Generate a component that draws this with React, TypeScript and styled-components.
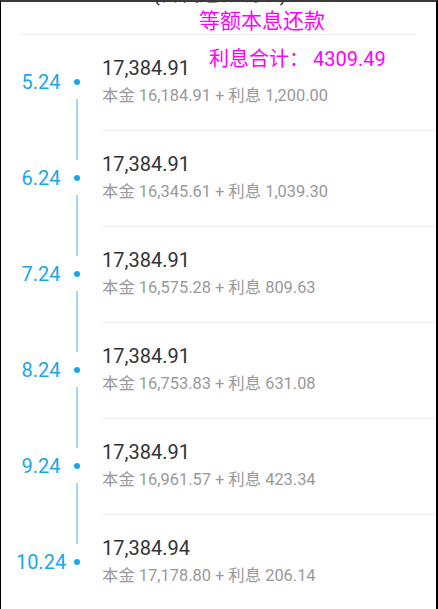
import React from "react";
import styled, { createGlobalStyle } from "styled-components";

const GlobalStyle = createGlobalStyle`
  html, body { margin: 0; padding: 0; background: #ffffff; }
  * { box-sizing: border-box; }
`;

const Frame = styled.div`
  position: relative;
  width: 438px;
  height: 609px;
  overflow: hidden;
  background: #ffffff;
  border-top: 2px solid #3a3a3a;
  border-left: 1px solid #000000;
  border-right: 2px solid #000000;
  font-family: Roboto, "Noto Sans CJK SC", sans-serif;
`;

const Header = styled.header`
  display: flex;
  flex-direction: column;
`;

const CutLine = styled.div`
  height: 7px;
  overflow: hidden;
  padding-left: 152px;
`;

const CutText = styled.span`
  display: block;
  margin-top: -20px;
  font-size: 20px;
  line-height: 24px;
  color: #333333;
`;

const Title = styled.h1`
  margin: 0;
  padding-left: 198px;
  font-size: 21px;
  line-height: 25px;
  font-weight: 400;
  color: #ff00ff;
`;

const HeaderDivider = styled.div`
  height: 1px;
  margin: 0 19px 0 19px;
  background: #efefef;
`;

const TotalBadge = styled.div`
  position: absolute;
  left: 208px;
  top: 45px;
  font-size: 20px;
  line-height: 24px;
  color: #ff00ff;
  white-space: nowrap;
`;

const TotalValue = styled.span`
  margin-left: 4px;
`;

const List = styled.div`
  display: flex;
  flex-direction: column;
`;

const Row = styled.div`
  display: flex;
  height: 96px;
  flex-shrink: 0;
`;

const DateLabel = styled.div`
  width: 60px;
  padding-left: 20px;
  display: flex;
  align-items: center;
  justify-content: center;
  padding-bottom: 2px;
  font-size: 20px;
  line-height: 24px;
  color: #1ba6e7;
  white-space: nowrap;
`;

const Timeline = styled.div`
  width: 31px;
  display: flex;
  flex-direction: column;
  align-items: center;
`;

const Segment = styled.div<{ $hidden?: boolean; $h: number }>`
  width: 2px;
  height: ${(p) => p.$h}px;
  background: ${(p) => (p.$hidden ? "transparent" : "#9dd7fb")};
`;

const Dot = styled.div`
  width: 6px;
  height: 6px;
  border-radius: 50%;
  background: #1ba6e7;
  margin: 15px 0 14px;
`;

const Content = styled.div`
  flex: 1;
  margin-left: 10px;
  display: flex;
  flex-direction: column;
  justify-content: center;
  padding-bottom: 2px;
  border-bottom: 1px solid #efefef;
`;

const Amount = styled.div`
  font-size: 20px;
  line-height: 28px;
  color: #333333;
`;

const Detail = styled.div`
  font-size: 16.4px;
  line-height: 28px;
  color: #999999;
  white-space: nowrap;
`;

const rows = [
  { date: "5.24", total: "17,384.91", principal: "16,184.91", interest: "1,200.00" },
  { date: "6.24", total: "17,384.91", principal: "16,345.61", interest: "1,039.30" },
  { date: "7.24", total: "17,384.91", principal: "16,575.28", interest: "809.63" },
  { date: "8.24", total: "17,384.91", principal: "16,753.83", interest: "631.08" },
  { date: "9.24", total: "17,384.91", principal: "16,961.57", interest: "423.34" },
  { date: "10.24", total: "17,384.94", principal: "17,178.80", interest: "206.14" },
];

export default function App() {
  return (
    <>
      <GlobalStyle />
      <Frame>
        <Header>
          <CutLine>
            <CutText>(含代还款明细)</CutText>
          </CutLine>
          <Title>等额本息还款</Title>
          <HeaderDivider />
        </Header>
        <List>
          {rows.map((r, i) => (
            <Row key={r.date}>
              <DateLabel>{r.date}</DateLabel>
              <Timeline>
                <Segment $h={29} $hidden={i === 0} />
                <Dot />
                <Segment $h={32} $hidden={i === rows.length - 1} />
              </Timeline>
              <Content>
                <Amount>{r.total}</Amount>
                <Detail>
                  本金 {r.principal} + 利息 {r.interest}
                </Detail>
              </Content>
            </Row>
          ))}
        </List>
        <TotalBadge>
          利息合计：<TotalValue>4309.49</TotalValue>
        </TotalBadge>
      </Frame>
    </>
  );
}
